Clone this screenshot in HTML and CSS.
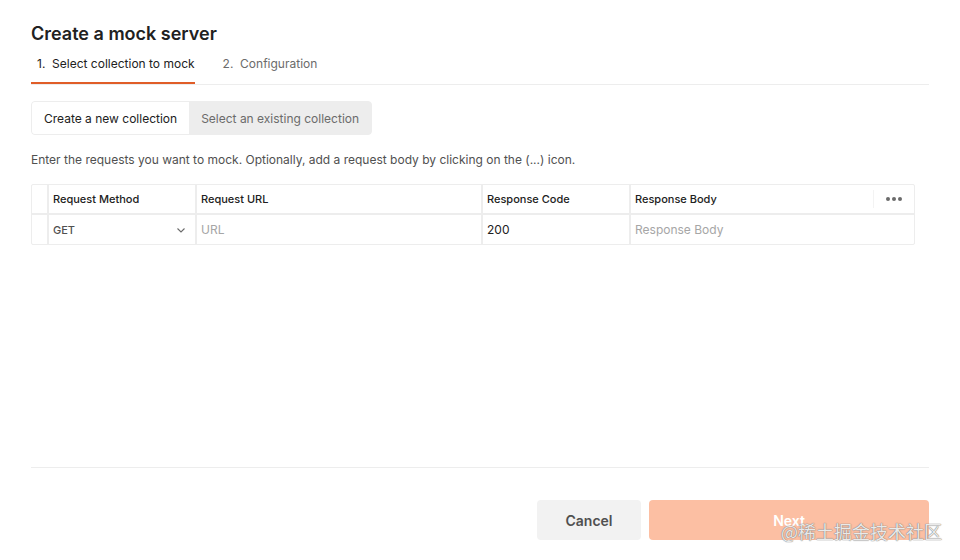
FILE: index.html
```html
<!DOCTYPE html>
<html lang="en">
<head>
    <meta charset="UTF-8">
    <meta name="viewport" content="width=device-width, initial-scale=1.0">
    <title>Create a mock server</title>
    <link rel="stylesheet" href="styles.css">
</head>
<body>

<div class="modal">
    <header class="modal-header">
        <h1>Create a mock server</h1>
        <nav class="steps">
            <span class="step active">1.&nbsp; Select collection to mock</span>
            <span class="step">2.&nbsp; Configuration</span>
        </nav>
    </header>

    <main class="modal-body">
        <!-- Collection source toggle -->
        <div class="segmented">
            <button class="segment selected">Create a new collection</button>
            <button class="segment">Select an existing collection</button>
        </div>

        <p class="hint">Enter the requests you want to mock. Optionally, add a request body by clicking on the (...) icon.</p>

        <!-- Requests table -->
        <div class="req-table">
            <div class="row head">
                <div class="cell gutter"></div>
                <div class="cell method">Request Method</div>
                <div class="cell url">Request URL</div>
                <div class="cell code">Response Code</div>
                <div class="cell body">Response Body</div>
                <div class="cell more">
                    <span class="dots"><i></i><i></i><i></i></span>
                </div>
            </div>
            <div class="row">
                <div class="cell gutter"></div>
                <div class="cell method select">
                    <span>GET</span>
                    <svg width="12" height="12" viewBox="0 0 12 12"><path d="M2.5 4.5 L6 8 L9.5 4.5" fill="none" stroke="#6b6b6b" stroke-width="1.1"/></svg>
                </div>
                <div class="cell url placeholder">URL</div>
                <div class="cell code value">200</div>
                <div class="cell body wide placeholder">Response Body</div>
            </div>
        </div>
    </main>

    <footer class="modal-footer">
        <button class="btn btn-secondary">Cancel</button>
        <button class="btn btn-primary" disabled>Next</button>
    </footer>
</div>

<span class="watermark">@稀土掘金技术社区</span>

</body>
</html>
```

FILE: styles.css
```css
body {
    font-family: Inter, "Noto Sans", Arial, sans-serif;
    margin: 0;
    padding: 0;
    background-color: #ffffff;
    color: #212121;
    width: 960px;
    height: 560px;
    overflow: hidden;
    position: relative;
}

.modal {
    display: flex;
    flex-direction: column;
    height: 560px;
    padding: 0 31px 0 31px;
    box-sizing: border-box;
}

.modal-header h1 {
    margin: 0;
    padding-top: 23px;
    font-size: 18px;
    font-weight: 600;
    line-height: 22px;
    color: #212121;
}

.steps {
    display: flex;
    margin-top: 11px;
    border-bottom: 1px solid #ededed;
}

.step {
    font-size: 12px;
    line-height: 16px;
    color: #6b6b6b;
    padding: 0 0 10px 6px;
    margin-right: 22px;
    border-bottom: 2px solid transparent;
}

.step.active {
    color: #212121;
    border-bottom-color: #e05d28;
}

.modal-body {
    flex: 1;
    padding-top: 16px;
}

.segmented {
    display: inline-flex;
    border: 1px solid #ededed;
    border-radius: 4px;
    background-color: #ededed;
}

.segment {
    font-family: inherit;
    font-size: 12px;
    border: none;
    background: transparent;
    color: #6b6b6b;
    padding: 0 12px;
    height: 32px;
    cursor: pointer;
}

.segment.selected {
    background-color: #ffffff;
    color: #212121;
    border-radius: 3px 0 0 3px;
}

.hint {
    font-size: 12px;
    color: #505050;
    margin: 17px 0 16px 0;
    line-height: 16px;
}

.req-table {
    width: 884px;
    box-sizing: border-box;
    border: 1px solid #ededed;
    border-radius: 2px;
}

.row {
    display: flex;
    height: 29px;
}

.row.head {
    height: 28px;
    border-bottom: 2px solid #ededed;
}

.cell {
    display: flex;
    align-items: center;
    box-sizing: border-box;
    padding: 0 4px;
    font-size: 11px;
    border-left: 2px solid #ededed;
}

.cell.gutter {
    width: 15px;
    border-left: none;
}

.head .cell {
    font-weight: 500;
    color: #212121;
}

.cell.method { width: 148px; }
.cell.url { width: 286px; }
.cell.code { width: 148px; }
.cell.body { width: 244px; }
.cell.body.wide { width: 285px; }

.cell.more {
    width: 41px;
    justify-content: center;
    border-left: 1px solid #f3f3f3;
    margin: 5px 0;
}

.dots {
    display: flex;
    gap: 2px;
}

.dots i {
    width: 4px;
    height: 4px;
    border-radius: 50%;
    background-color: #6b6b6b;
}

.select {
    justify-content: space-between;
    color: #505050;
    font-weight: 500;
    padding-right: 8px;
}

.placeholder {
    color: #a6a6a6;
    font-size: 12px;
}

.value {
    color: #212121;
    font-size: 12px;
}

.modal-footer {
    display: flex;
    justify-content: flex-end;
    gap: 8px;
    border-top: 1px solid #ededed;
    padding: 32px 0 20px 0;
}

.btn {
    font-family: inherit;
    font-size: 14px;
    font-weight: 600;
    height: 40px;
    border: none;
    border-radius: 4px;
    cursor: pointer;
}

.btn-secondary {
    width: 104px;
    background-color: #f2f2f2;
    color: #505050;
}

.btn-primary {
    width: 280px;
    background-color: #fcbfa3;
    color: #ffffff;
}

.watermark {
    position: absolute;
    left: 781px;
    top: 518px;
    font-family: "Noto Sans CJK SC", sans-serif;
    font-size: 18px;
    color: rgba(255, 255, 255, 0.85);
    text-shadow: 0 0 1px #777, 0 0 1px #777;
}
```
